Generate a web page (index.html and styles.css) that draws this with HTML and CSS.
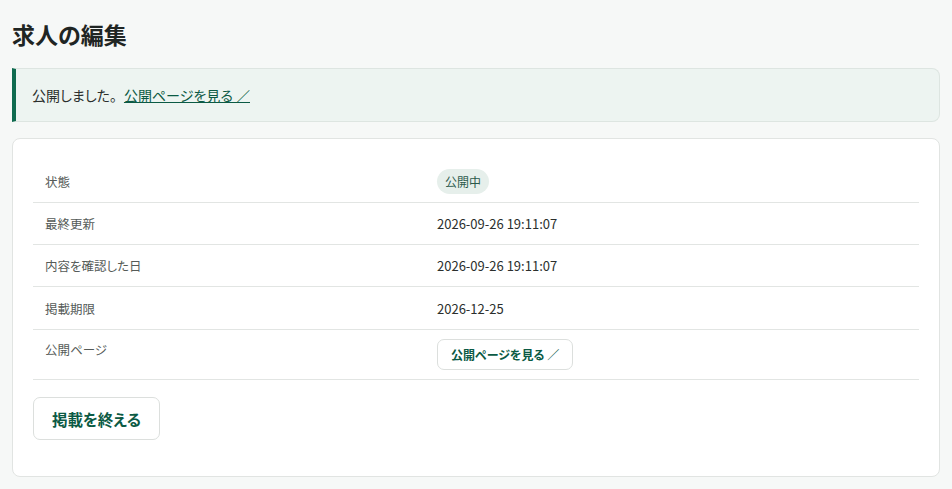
FILE: index.html
```html
<!DOCTYPE html>
<html lang="ja">
<head>
    <meta charset="UTF-8">
    <meta name="viewport" content="width=device-width, initial-scale=1.0">
    <title>求人の編集</title>
    <link rel="stylesheet" href="styles.css">
</head>
<body>
    <h1>求人の編集</h1>

    <!-- お知らせ -->
    <div class="flash">
        公開しました。<a href="#">公開ページを見る ／</a>
    </div>

    <!-- 掲載情報 -->
    <div class="card">
        <div class="info">
            <div class="row">
                <div class="label">状態</div>
                <div class="value"><span class="badge">公開中</span></div>
            </div>
            <div class="row">
                <div class="label">最終更新</div>
                <div class="value">2026-09-26 19:11:07</div>
            </div>
            <div class="row">
                <div class="label">内容を確認した日</div>
                <div class="value">2026-09-26 19:11:07</div>
            </div>
            <div class="row row-tall">
                <div class="label">掲載期限</div>
                <div class="value">2026-12-25</div>
            </div>
            <div class="row row-last">
                <div class="label">公開ページ</div>
                <div class="value"><a class="btn btn-small" href="#">公開ページを見る ／</a></div>
            </div>
        </div>
        <button class="btn btn-end">掲載を終える</button>
    </div>
</body>
</html>
```

FILE: styles.css
```css
body {
    font-family: "Noto Sans CJK JP", "Noto Sans", sans-serif;
    font-feature-settings: "palt";
    background-color: #f6f8f7;
    color: #2b2f2d;
    margin: 0;
    padding: 17px 12px 12px;
}
h1 {
    font-size: 23px;
    font-weight: bold;
    color: #1f2523;
    margin: 0 0 17px;
    line-height: 34px;
}
.flash {
    background-color: #edf4f1;
    border: 1px solid #dde5e1;
    border-left: 4px solid #0f6b4f;
    border-radius: 0 8px 8px 0;
    padding: 0 16px;
    height: 52px;
    line-height: 52px;
    font-size: 14px;
    color: #2b2f2d;
    margin-bottom: 16px;
}
.flash a {
    color: #0b5a44;
    text-decoration: underline;
    margin-left: 7px;
}
.card {
    background-color: #fff;
    border: 1px solid #e1e4e2;
    border-radius: 8px;
    padding: 22px 20px 36px;
}
.info {
    font-size: 13px;
}
.row {
    display: grid;
    grid-template-columns: 404px 1fr;
    align-items: center;
    height: 41px;
    border-bottom: 1px solid #e2e5e3;
}
.row-tall {
    height: 42px;
}
.row-last {
    height: 49px;
    align-items: start;
}
.row-last .label {
    padding-top: 10px;
}
.row-last .value {
    padding-top: 9px;
}
.label {
    padding-left: 12px;
    font-size: 12.5px;
    color: #555b58;
}
.value {
    color: #2b2f2d;
}
.badge {
    display: inline-block;
    vertical-align: middle;
    background-color: #e6efeb;
    color: #2c5a4b;
    font-size: 12px;
    padding: 0 8px;
    height: 25px;
    line-height: 25px;
    border-radius: 13px;
}
.btn {
    display: inline-block;
    box-sizing: border-box;
    background-color: #fff;
    border: 1px solid #dcdfdd;
    border-radius: 7px;
    color: #0b5a44;
    font-family: inherit;
    font-feature-settings: "palt";
    font-weight: bold;
    text-decoration: none;
    cursor: pointer;
}
.btn-small {
    font-size: 12px;
    padding: 0 13px;
    height: 31px;
    line-height: 29px;
}
.btn-end {
    font-size: 15.5px;
    padding: 0 18px;
    height: 43px;
    margin: 17px 0 0;
}
```
